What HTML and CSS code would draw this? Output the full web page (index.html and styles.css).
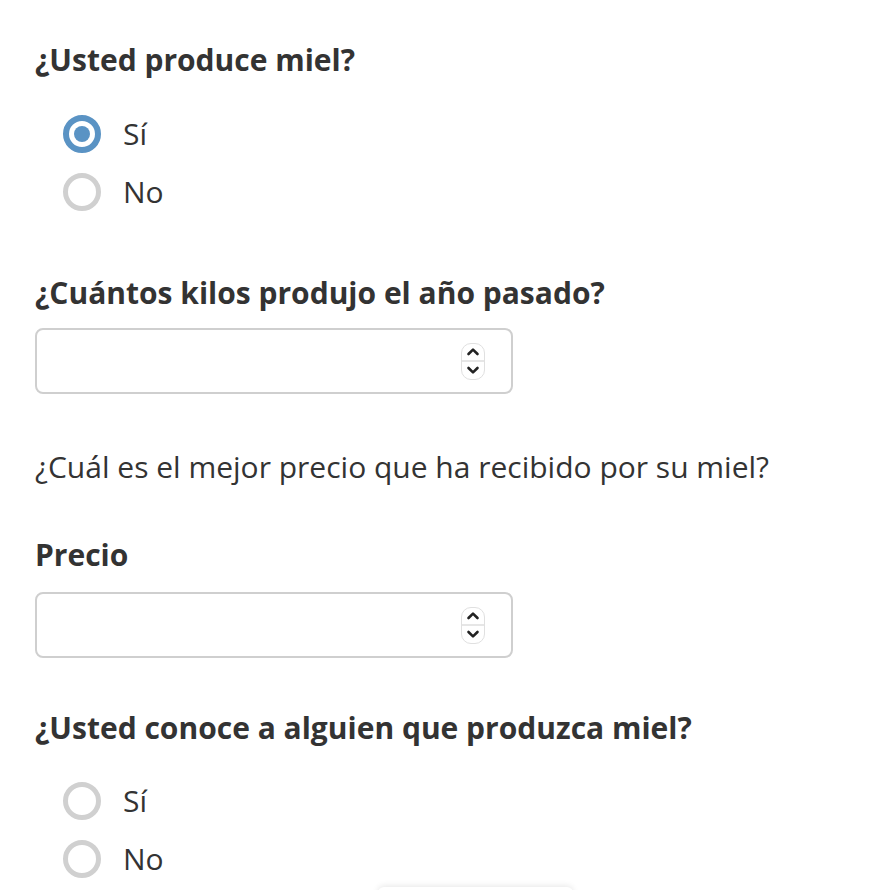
FILE: index.html
```html
<!DOCTYPE html>
<html lang="es">
<head>
<meta charset="utf-8">
<title>Formulario miel</title>
<link rel="stylesheet" href="styles.css">
</head>
<body>
<main class="form">
  <section class="field">
    <h2 class="question">¿Usted produce miel?</h2>
    <div class="options">
      <label class="option"><span class="radio checked"></span><span class="opt-text">Sí</span></label>
      <label class="option"><span class="radio"></span><span class="opt-text">No</span></label>
    </div>
  </section>

  <section class="field field-input">
    <h2 class="question">¿Cuántos kilos produjo el año pasado?</h2>
    <div class="number-input">
      <span class="spinner">
        <svg class="chev" viewBox="0 0 14 9" width="14" height="9"><path d="M2.5 7 L7 2.6 L11.5 7" fill="none" stroke="#222" stroke-width="2.6" stroke-linecap="round" stroke-linejoin="round"/></svg>
        <span class="spin-sep"></span>
        <svg class="chev" viewBox="0 0 14 9" width="14" height="9"><path d="M2.5 2 L7 6.4 L11.5 2" fill="none" stroke="#222" stroke-width="2.6" stroke-linecap="round" stroke-linejoin="round"/></svg>
      </span>
    </div>
  </section>

  <p class="note">¿Cuál es el mejor precio que ha recibido por su miel?</p>

  <section class="field field-input">
    <h2 class="question">Precio</h2>
    <div class="number-input">
      <span class="spinner">
        <svg class="chev" viewBox="0 0 14 9" width="14" height="9"><path d="M2.5 7 L7 2.6 L11.5 7" fill="none" stroke="#222" stroke-width="2.6" stroke-linecap="round" stroke-linejoin="round"/></svg>
        <span class="spin-sep"></span>
        <svg class="chev" viewBox="0 0 14 9" width="14" height="9"><path d="M2.5 2 L7 6.4 L11.5 2" fill="none" stroke="#222" stroke-width="2.6" stroke-linecap="round" stroke-linejoin="round"/></svg>
      </span>
    </div>
  </section>

  <section class="field field-last">
    <h2 class="question">¿Usted conoce a alguien que produzca miel?</h2>
    <div class="options">
      <label class="option"><span class="radio"></span><span class="opt-text">Sí</span></label>
      <label class="option"><span class="radio"></span><span class="opt-text">No</span></label>
    </div>
  </section>
</main>
<div class="floating"></div>
</body>
</html>
```

FILE: styles.css
```css
html, body {
  margin: 0;
  padding: 0;
  background: #fff;
  height: 890px;
  overflow: hidden;
}
body {
  font-family: "Open Sans", "Liberation Sans", sans-serif;
  color: #333;
  position: relative;
}
.form {
  padding: 42px 35px 0 35px;
}
.question {
  margin: 0;
  font-size: 30px;
  line-height: 36px;
  font-weight: 700;
  color: #333;
}
.options {
  display: flex;
  flex-direction: column;
  gap: 20px;
  padding-left: 28px;
  margin-top: 37px;
}
.option {
  display: flex;
  align-items: center;
  gap: 22px;
  height: 38px;
}
.radio {
  box-sizing: border-box;
  width: 38px;
  height: 38px;
  border-radius: 50%;
  border: 5px solid #d0d0d0;
  background: #fff;
  display: flex;
  align-items: center;
  justify-content: center;
}
.radio.checked {
  border: 6px solid #5a93c4;
}
.radio.checked::after {
  content: "";
  width: 16px;
  height: 16px;
  border-radius: 50%;
  background: #5a93c4;
}
.opt-text {
  font-size: 30px;
  line-height: 36px;
  color: #333;
}
.field-input {
  margin-top: 64px;
}
.field-input .question {
  margin-bottom: 17px;
}
.number-input {
  box-sizing: border-box;
  width: 478px;
  height: 66px;
  border: 2px solid #cfcfcf;
  border-radius: 8px;
  background: #fff;
  display: flex;
  align-items: center;
  justify-content: flex-end;
  padding-right: 26px;
}
.spinner {
  box-sizing: border-box;
  width: 24px;
  height: 37px;
  border: 1px solid #e0e0e0;
  border-radius: 10px;
  display: flex;
  flex-direction: column;
  align-items: center;
  justify-content: space-evenly;
  background: #fff;
}
.spin-sep {
  width: 100%;
  height: 2px;
  background: #e6e6e6;
}
.chev {
  display: block;
}
.note {
  margin: 55px 0 0 0;
  font-size: 30px;
  line-height: 36px;
  color: #333;
}
.note + .field-input {
  margin-top: 52px;
}
.note + .field-input .question {
  margin-bottom: 19px;
}
.field-last {
  margin-top: 52px;
}
.field-last .options {
  margin-top: 36px;
}
.floating {
  position: absolute;
  left: 378px;
  top: 887px;
  width: 195px;
  height: 40px;
  background: #fff;
  border-radius: 6px;
  box-shadow: 0 -1px 6px rgba(0, 0, 0, 0.1);
}
```
